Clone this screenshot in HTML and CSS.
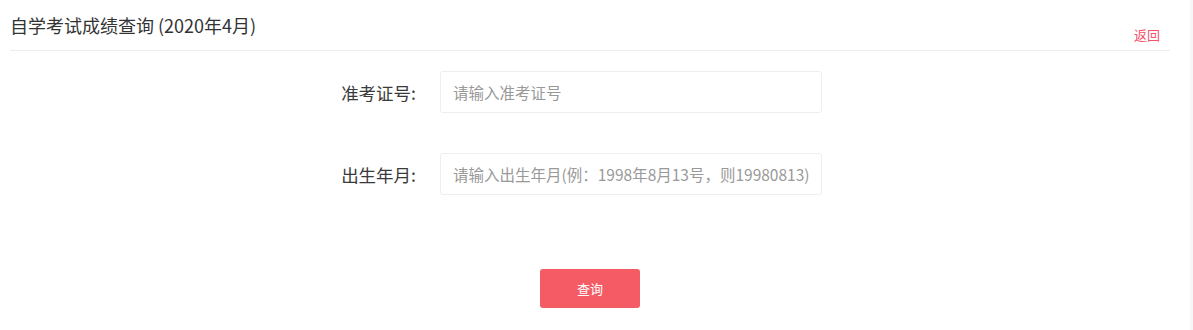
FILE: index.html
```html
<!DOCTYPE html>
<html lang="zh-CN">

<head>
    <meta charset="UTF-8">
    <meta name="viewport" content="width=device-width, initial-scale=1.0">
    <title>自学考试成绩查询</title>
    <link rel="stylesheet" href="styles.css">
</head>

<body>
    <div class="page">
        <div class="header">
            <h1>自学考试成绩查询 (2020年4月)</h1>
            <a class="back" href="#">返回</a>
        </div>
        <div class="form">
            <div class="form-row">
                <label for="ticket">准考证号:</label>
                <input type="text" id="ticket" placeholder="请输入准考证号">
            </div>
            <div class="form-row">
                <label for="birth">出生年月:</label>
                <input type="text" id="birth" placeholder="请输入出生年月(例：1998年8月13号，则19980813)">
            </div>
            <div class="form-action">
                <button id="search-btn">查询</button>
            </div>
        </div>
    </div>
</body>

</html>
```

FILE: styles.css
```css
* {
    margin: 0px;
    padding: 0px;
    box-sizing: border-box;
}

html {
    background: #f7f7f7;
}

body {
    font-family: "Microsoft YaHei", "Noto Sans CJK SC", sans-serif;
    background: #fff;
    color: #333;
    margin-right: 3px;
    height: 330px;
}

.page {
    padding: 0 20px 0 10px;
}

.header {
    height: 51px;
    display: flex;
    justify-content: space-between;
    align-items: flex-end;
    border-bottom: 1px solid #eee;
}

.header h1 {
    font-size: 18px;
    font-weight: normal;
    line-height: 24px;
    margin-bottom: 13px;
}

.header .back {
    font-size: 13px;
    color: #f4516c;
    text-decoration: none;
    margin-right: 10px;
    margin-bottom: 6px;
}

.form {
    padding-left: 256px;
}

.form .form-row {
    display: flex;
    align-items: center;
    margin-top: 20px;
}

.form .form-row + .form-row {
    margin-top: 40px;
}

.form .form-row label {
    width: 174px;
    padding-right: 24px;
    text-align: right;
    font-size: 17.5px;
    color: #3a3a3a;
}

.form .form-row input {
    width: 382px;
    height: 42px;
    padding: 0 12px;
    border: 1px solid #eee;
    border-radius: 3px;
    outline: none;
    font-family: inherit;
    font-size: 15.5px;
    color: #333;
}

.form .form-row input::placeholder {
    color: #999;
}

.form .form-action {
    margin-top: 74px;
    padding-left: 274px;
}

.form .form-action button {
    width: 100px;
    height: 39px;
    background: #f45b64;
    color: #fff;
    border: none;
    border-radius: 3px;
    font-family: inherit;
    font-size: 13px;
    cursor: pointer;
}
```
